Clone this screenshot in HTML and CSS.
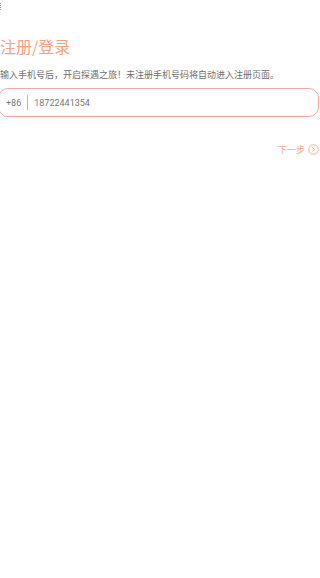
FILE: index.html
```html
<!DOCTYPE html>
<html>
<head>
	<meta charset="utf-8">
	<meta name="viewport" content="width=device-width, initial-scale=1">
	<title>注册/登录</title>
	<link rel="stylesheet" href="styles.css">
</head>
<body>
	<div class="topbar">
		<span class="back"></span>
	</div>
	<div class="container">
		<h1 class="title">注册/登录</h1>
		<p class="tip">输入手机号后，开启探遇之旅！未注册手机号码将自动进入注册页面。</p>
		<div class="phone-box">
			<span class="code">+86</span>
			<span class="line"></span>
			<input type="text" class="phone" value="18722441354">
		</div>
		<div class="next">
			<span>下一步</span>
			<svg width="11" height="11" viewBox="0 0 12 12">
				<circle cx="6" cy="6" r="5.2" fill="none" stroke="#f4a98a" stroke-width="1"/>
				<path d="M5 3.8 L7.2 6 L5 8.2" fill="none" stroke="#f4a98a" stroke-width="1"/>
			</svg>
		</div>
	</div>
</body>
</html>
```

FILE: styles.css
```css
body {
	margin: 0;
	padding: 0;
	background-color: #fff;
	font-family: "Noto Sans CJK SC", Roboto, sans-serif;
	color: #333;
}
.topbar {
	height: 25px;
}
.back {
	display: block;
	width: 2px;
	height: 7px;
	margin-top: 3px;
	border-left: 1px dotted #999;
}
.container {
	padding: 0 1px 0 0;
}
.title {
	margin: 6px 0 0 0;
	font-size: 16px;
	font-weight: normal;
	color: #f2a385;
	line-height: 24px;
}
.tip {
	margin: 10px 0 0 0;
	font-size: 9px;
	color: #707070;
	line-height: 14px;
	white-space: nowrap;
}
.phone-box {
	display: flex;
	align-items: center;
	height: 27px;
	margin: 6px 0 0 -2px;
	border: 1px solid #f4a7a2;
	border-radius: 10px;
	padding-left: 7px;
}
.code {
	font-family: Roboto, sans-serif;
	font-size: 9px;
	color: #777;
}
.line {
	width: 1px;
	height: 15px;
	background-color: #bbb;
	margin: 0 6px;
}
.phone {
	border: none;
	outline: none;
	padding: 0;
	font-family: Roboto, sans-serif;
	font-size: 9px;
	color: #777;
	flex: 1;
	background: transparent;
}
.next {
	display: flex;
	justify-content: flex-end;
	align-items: center;
	gap: 3px;
	margin-top: 26px;
	font-size: 9px;
	color: #f4a98a;
}
```
